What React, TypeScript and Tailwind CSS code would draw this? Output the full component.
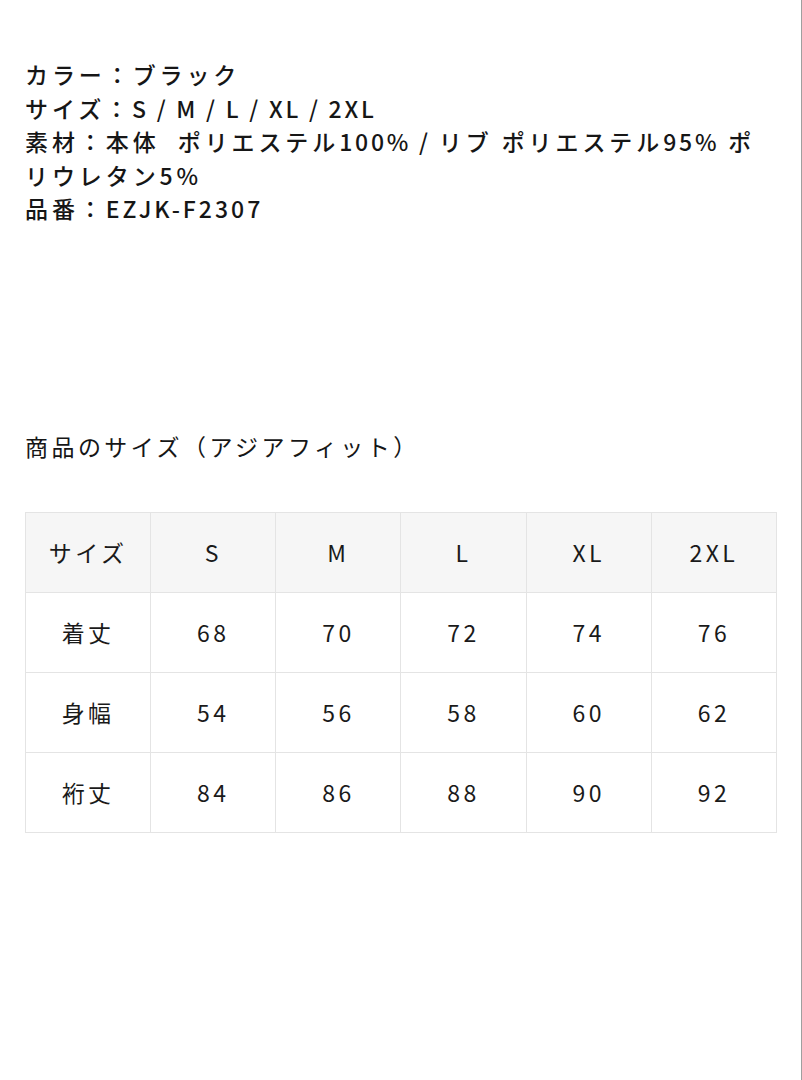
export default function App() {
  const rows = [
    ["着丈", "68", "70", "72", "74", "76"],
    ["身幅", "54", "56", "58", "60", "62"],
    ["裄丈", "84", "86", "88", "90", "92"],
  ];
  const head = ["サイズ", "S", "M", "L", "XL", "2XL"];
  return (
    <div
      className="min-h-[1080px] w-[802px] bg-white border-r border-[#9f9f9f] px-[25px] pt-[58px] text-[#161616]"
      style={{ fontFamily: '"Noto Sans CJK JP", "Noto Sans", sans-serif' }}
    >
      <div className="text-[23px] leading-[33.6px] font-medium tracking-[0.17em]">
        <p>カラー：ブラック</p>
        <p>
          サイズ：<span className="tracking-[0.12em]">S / M / L / XL / 2XL</span>
        </p>
        <p>
          素材：本体&nbsp; ポリエステル<span className="tracking-[0.12em]">100% / </span>リブ ポリエステル
          <span className="tracking-[0.12em]">95%</span> ポリウレタン5%
        </p>
        <p>
          品番：<span className="tracking-[0.13em]">EZJK-F2307</span>
        </p>
      </div>
      <h2 className="mt-[204px] text-[23px] leading-[33.6px] font-normal tracking-[0.15em]">
        商品のサイズ（アジアフィット）
      </h2>
      <table className="mt-[48px] w-[752px] table-fixed border-collapse text-[23px] tracking-[0.15em] text-[#1a1a1a]">
        <thead>
          <tr className="bg-[#f6f6f6]">
            {head.map((h) => (
              <th key={h} className="h-[80px] border border-[#e4e4e4] text-center font-normal">
                {h}
              </th>
            ))}
          </tr>
        </thead>
        <tbody>
          {rows.map((r) => (
            <tr key={r[0]}>
              {r.map((c, i) => (
                <td key={i} className="h-[80px] border border-[#e4e4e4] text-center">
                  {c}
                </td>
              ))}
            </tr>
          ))}
        </tbody>
      </table>
    </div>
  );
}
